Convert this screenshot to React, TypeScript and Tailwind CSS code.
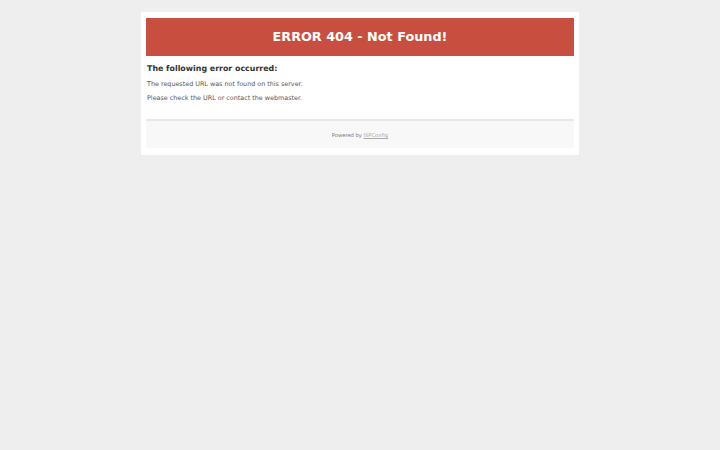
export default function App() {
  return (
    <div className="min-h-[450px] w-full bg-[#eeeeee] pt-3" style={{ fontFamily: '"DejaVu Sans", sans-serif' }}>
      <div className="mx-auto w-[438px] bg-white px-[5px] pt-[6px] pb-[7px]">
        <div className="flex h-[38px] items-center justify-center bg-[#c84f40] text-[12.8px] font-bold text-white">
          ERROR 404 - Not Found!
        </div>
        <div className="px-[1px] pt-[6px] pb-[16px]">
          <h2 className="text-[7.9px] font-bold leading-[14px] text-[#333333]">The following error occurred:</h2>
          <p className="mt-[3px] text-[6.4px] leading-[10px] text-[#555555]">The requested URL was not found on this server.</p>
          <p className="mt-[4px] text-[6.4px] leading-[10px] text-[#555555]">Please check the URL or contact the webmaster.</p>
        </div>
        <div className="flex h-[29px] items-center justify-center border-t-2 border-[#e8e8e8] bg-[#f8f8f8] pt-[2px] text-[5.2px] text-[#777777]">
          <span>
            Powered by <a className="text-[#aaaaaa] underline">ISPConfig</a>
          </span>
        </div>
      </div>
    </div>
  );
}
